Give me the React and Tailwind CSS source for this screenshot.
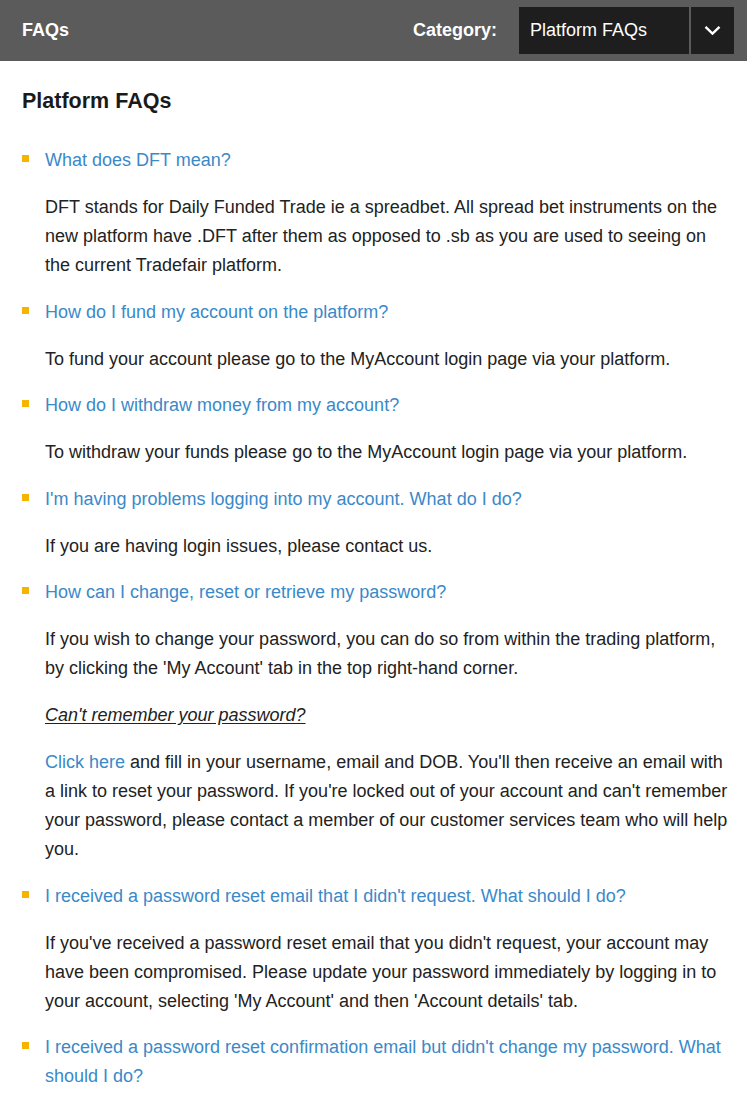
import React from "react";

const faqs = [
  {
    q: "What does DFT mean?",
    a: [
      "DFT stands for Daily Funded Trade ie a spreadbet. All spread bet instruments on the new platform have .DFT after them as opposed to .sb as you are used to seeing on the current Tradefair platform.",
    ],
  },
  {
    q: "How do I fund my account on the platform?",
    a: ["To fund your account please go to the MyAccount login page via your platform."],
  },
  {
    q: "How do I withdraw money from my account?",
    a: ["To withdraw your funds please go to the MyAccount login page via your platform."],
  },
  {
    q: "I'm having problems logging into my account. What do I do?",
    a: ["If you are having login issues, please contact us."],
  },
  {
    q: "How can I change, reset or retrieve my password?",
    a: [
      "If you wish to change your password, you can do so from within the trading platform, by clicking the 'My Account' tab in the top right-hand corner.",
      "remember",
      "clickhere",
    ],
  },
  {
    q: "I received a password reset email that I didn't request. What should I do?",
    a: [
      "If you've received a password reset email that you didn't request, your account may have been compromised. Please update your password immediately by logging in to your account, selecting 'My Account' and then 'Account details' tab.",
    ],
  },
  {
    q: "I received a password reset confirmation email but didn't change my password. What should I do?",
    a: [],
  },
];

function Answer({ text }) {
  if (text === "remember") {
    return (
      <p className="mt-[18px] italic underline underline-offset-2">Can't remember your password?</p>
    );
  }
  if (text === "clickhere") {
    return (
      <p className="mt-[18px]">
        <a href="#" className="text-[#3a89c9]">Click here</a> and fill in your username, email and
        DOB. You'll then receive an email with a link to reset your password. If you're locked out of
        your account and can't remember your password, please contact a member of our customer
        services team who will help you.
      </p>
    );
  }
  return <p className="mt-[18px]">{text}</p>;
}

export default function App() {
  return (
    <div className="min-h-screen bg-white font-['Liberation_Sans',Arial,sans-serif] text-[18px] leading-[29px] text-[#222]">
      {/* Header */}
      <div className="flex h-[61px] items-center bg-[#5b5b5b] pl-[22px] pr-[13px]">
        <span className="font-bold text-white">FAQs</span>
        <span className="ml-auto mr-[22px] font-bold text-white">Category:</span>
        <div className="flex h-[47px] w-[215px] bg-[#1e1e1e]">
          <div className="flex flex-1 items-center pl-[11px] text-white">Platform FAQs</div>
          <div className="w-[2px] bg-[#5b5b5b]" />
          <div className="flex w-[43px] items-center justify-center">
            <svg width="17" height="11" viewBox="0 0 17 11" fill="none">
              <path d="M1.5 1.8 8.5 8.6 15.5 1.8" stroke="#fff" strokeWidth="2.4" />
            </svg>
          </div>
        </div>
      </div>

      {/* Content */}
      <div className="pl-[22px] pr-[18px] pt-[26px]">
        <h1 className="mb-[30px] text-[21.5px] font-bold text-[#1a1a1a]">Platform FAQs</h1>
        <ul>
          {faqs.map((f, i) => (
            <li key={i} className={i > 0 ? "mt-[17.5px]" : ""}>
              <div className="flex">
                <span className="mt-[9px] h-[7px] w-[7px] shrink-0 bg-[#f5b400]" />
                <a href="#" className="ml-[16px] text-[#3a89c9]">{f.q}</a>
              </div>
              <div className="pl-[23px]">
                {f.a.map((t, j) => (
                  <Answer key={j} text={t} />
                ))}
              </div>
            </li>
          ))}
        </ul>
      </div>
    </div>
  );
}
